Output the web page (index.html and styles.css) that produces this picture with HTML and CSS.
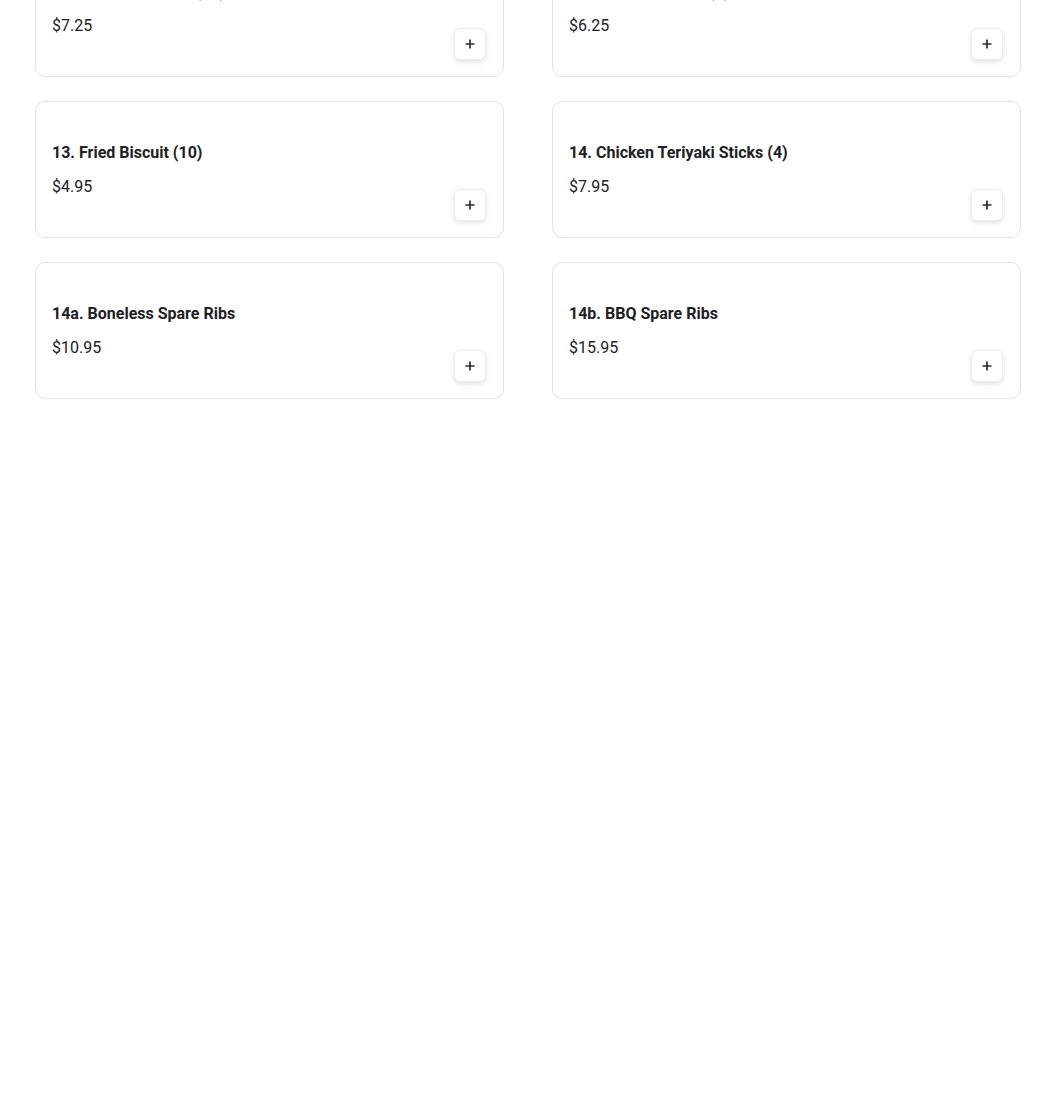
FILE: index.html
```html
<!DOCTYPE html>
<html>
    <head>
        <title>Menu</title>
        <link rel="stylesheet" href="styles.css">
    </head>
    <body>
        <main class="menu">
            <div class="menu-grid">
                <div class="item-card">
                    <div class="item-info">
                        <div class="item-name">11. Cheese Wonton (10)</div>
                        <div class="item-price">$7.25</div>
                    </div>
                    <button class="add-btn" type="button">
                        <svg viewBox="0 0 12 12" width="12" height="12"><path d="M6 1.5v9M1.5 6h9"/></svg>
                    </button>
                </div>
                <div class="item-card">
                    <div class="item-info">
                        <div class="item-name">12. Fried Dumpling (6)</div>
                        <div class="item-price">$6.25</div>
                    </div>
                    <button class="add-btn" type="button">
                        <svg viewBox="0 0 12 12" width="12" height="12"><path d="M6 1.5v9M1.5 6h9"/></svg>
                    </button>
                </div>
                <div class="item-card">
                    <div class="item-info">
                        <div class="item-name">13. Fried Biscuit (10)</div>
                        <div class="item-price">$4.95</div>
                    </div>
                    <button class="add-btn" type="button">
                        <svg viewBox="0 0 12 12" width="12" height="12"><path d="M6 1.5v9M1.5 6h9"/></svg>
                    </button>
                </div>
                <div class="item-card">
                    <div class="item-info">
                        <div class="item-name">14. Chicken Teriyaki Sticks (4)</div>
                        <div class="item-price">$7.95</div>
                    </div>
                    <button class="add-btn" type="button">
                        <svg viewBox="0 0 12 12" width="12" height="12"><path d="M6 1.5v9M1.5 6h9"/></svg>
                    </button>
                </div>
                <div class="item-card">
                    <div class="item-info">
                        <div class="item-name">14a. Boneless Spare Ribs</div>
                        <div class="item-price">$10.95</div>
                    </div>
                    <button class="add-btn" type="button">
                        <svg viewBox="0 0 12 12" width="12" height="12"><path d="M6 1.5v9M1.5 6h9"/></svg>
                    </button>
                </div>
                <div class="item-card">
                    <div class="item-info">
                        <div class="item-name">14b. BBQ Spare Ribs</div>
                        <div class="item-price">$15.95</div>
                    </div>
                    <button class="add-btn" type="button">
                        <svg viewBox="0 0 12 12" width="12" height="12"><path d="M6 1.5v9M1.5 6h9"/></svg>
                    </button>
                </div>
            </div>
        </main>
    </body>
</html>
```

FILE: styles.css
```css
:root {
    --text-color: #202124;
    --border-color: #e3e3e3;
    --card-radius: 10px;
}

*, *::before, *::after {
    box-sizing: border-box;
}

body {
    margin: 0px;
    background-color: #fff;
    color: var(--text-color);
    font-family: Roboto, "Liberation Sans", sans-serif;
}

.menu {
    padding: 0px 29px 0px 35px;
}

/* list is scrolled, first row only shows its bottom */
.menu-grid {
    display: grid;
    grid-template-columns: 1fr 1fr;
    column-gap: 48px;
    row-gap: 24px;
    margin-top: -60px;
}

.item-card {
    display: flex;
    justify-content: space-between;
    height: 137px;
    padding: 16px 17px 16px 16px;
    border: 1px solid var(--border-color);
    border-radius: var(--card-radius);
    background-color: #fff;
}

.item-info {
    display: flex;
    flex-direction: column;
    padding-top: 23px;
}

.item-name {
    font-size: 16px;
    font-weight: 700;
    line-height: 24px;
}

.item-price {
    margin-top: 10px;
    font-size: 16px;
    line-height: 24px;
}

.add-btn {
    align-self: flex-end;
    display: flex;
    align-items: center;
    justify-content: center;
    width: 32px;
    height: 32px;
    padding: 0px;
    border: 1px solid #ececec;
    border-radius: 6px;
    background-color: #fff;
    box-shadow: 0px 2px 5px rgba(0, 0, 0, 0.12);
    cursor: pointer;
}

.add-btn svg path {
    stroke: #2b2b2b;
    stroke-width: 1.7;
    fill: none;
}
```
